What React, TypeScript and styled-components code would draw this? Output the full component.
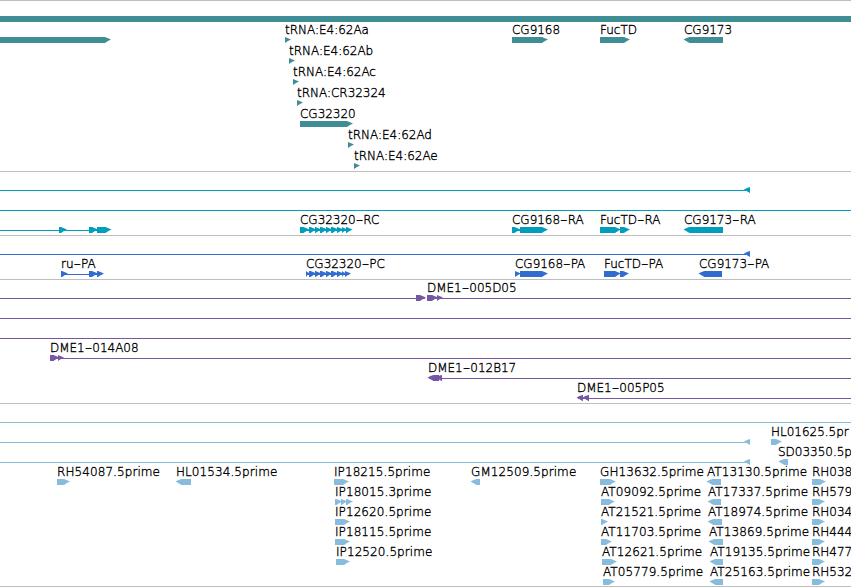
import { Fragment } from 'react';
import styled, { createGlobalStyle } from 'styled-components';

type Direction = 'right' | 'left' | 'none';

interface ExonType {
  start: number;
  end: number;
  dir: Direction;
}

interface FeatureType {
  label?: string;
  exons: ExonType[];
  intron?: [number, number];
}

interface TrackType {
  name: string;
  color: string;
  rowHeight: number;
  padding: string;
  rows: FeatureType[][];
}

const VIEW_WIDTH = 851;

function right(start: number, end: number): ExonType {
  return { start, end, dir: 'right' };
}

function left(start: number, end: number): ExonType {
  return { start, end, dir: 'left' };
}

function feature(label: string, ...exons: ExonType[]): FeatureType {
  return { label, exons };
}

// neighbouring exons, each tip running slightly into the next one
function chain(...points: number[]): ExonType[] {
  return points.slice(1).map((point, idx) => right(points[idx], idx < points.length - 2 ? point + 1.5 : point));
}

const fullLine: FeatureType = { exons: [], intron: [0, VIEW_WIDTH] };
const reverseLine: FeatureType = { exons: [left(744, 750)], intron: [0, 746] };

const tracks: TrackType[] = [
  {
    name: 'gene',
    color: '#408e95',
    rowHeight: 21,
    padding: '0 0 2px',
    rows: [
      [{ exons: [{ start: 0, end: VIEW_WIDTH, dir: 'none' }] }],
      [
        { exons: [right(0, 111)] },
        feature('tRNA:E4:62Aa', right(285, 291)),
        feature('CG9168', right(512, 548)),
        feature('FucTD', right(600, 630)),
        feature('CG9173', left(683.5, 723)),
      ],
      [feature('tRNA:E4:62Ab', right(289, 295))],
      [feature('tRNA:E4:62Ac', right(293, 299))],
      [feature('tRNA:CR32324', right(297, 303))],
      [feature('CG32320', right(300, 353))],
      [feature('tRNA:E4:62Ad', right(348, 354))],
      [feature('tRNA:E4:62Ae', right(354, 360))],
    ],
  },
  {
    name: 'mrna',
    color: '#009dbd',
    rowHeight: 20,
    padding: '1px 0 2px',
    rows: [
      [reverseLine],
      [fullLine],
      [
        { exons: [right(59, 67), right(89, 98), right(97, 111.5)], intron: [0, 97] },
        {
          ...feature('CG32320-RC', right(300, 309.5), ...chain(309, 315, 320, 326, 331, 337, 342, 346, 352.5)),
          intron: [300, 350],
        },
        { ...feature('CG9168-RA', right(512, 520.5), right(520, 548)), intron: [512, 546] },
        feature('FucTD-RA', right(600, 621), right(620, 630)),
        feature('CG9173-RA', left(683.5, 723)),
      ],
    ],
  },
  {
    name: 'cds',
    color: '#316dce',
    rowHeight: 20,
    padding: '1px 0 2px',
    rows: [
      [reverseLine],
      [
        { ...feature('ru-PA', right(61, 68), right(89, 98), right(97, 104)), intron: [61, 102] },
        { ...feature('CG32320-PC', ...chain(306, 309, 315, 320, 326, 331, 337, 342, 345, 351)), intron: [306, 349] },
        feature('CG9168-PA', right(515, 521), right(520, 548)),
        feature('FucTD-PA', right(604, 621), right(620, 629)),
        feature('CG9173-PA', left(698.5, 722)),
      ],
    ],
  },
  {
    name: 'bac',
    color: '#7458a5',
    rowHeight: 20,
    padding: '1px 0 2px',
    rows: [
      [
        { exons: [right(416, 426)], intron: [0, 425] },
        { ...feature('DME1-005D05', right(427, 438), right(437, 443)), intron: [427, VIEW_WIDTH] },
      ],
      [fullLine],
      [fullLine],
      [{ ...feature('DME1-014A08', right(50, 59.5), right(58, 64)), intron: [50, VIEW_WIDTH] }],
      [{ ...feature('DME1-012B17', left(427.5, 439), left(435.5, 442)), intron: [429, VIEW_WIDTH] }],
      [{ ...feature('DME1-005P05', left(576.5, 583), left(582.5, 589)), intron: [578, VIEW_WIDTH] }],
    ],
  },
  {
    name: 'est',
    color: '#88bcdc',
    rowHeight: 20,
    padding: '1px 0 1px',
    rows: [
      [fullLine],
      [reverseLine, feature('HL01625.5pr', right(771, 782))],
      [reverseLine, feature('SD03350.5p', left(778.4, 788))],
      [
        feature('RH54087.5prime', right(57, 70)),
        feature('HL01534.5prime', left(175.5, 191)),
        feature('IP18215.5prime', right(334, 349)),
        feature('GM12509.5prime', left(470.5, 480)),
        feature('GH13632.5prime', right(600, 616)),
        feature('AT13130.5prime', left(706.5, 721)),
        feature('RH038', right(812, 826)),
      ],
      [
        feature('IP18015.3prime', ...chain(335, 341, 346, 353)),
        feature('AT09092.5prime', right(601, 615)),
        feature('AT17337.5prime', left(707.5, 721)),
        feature('RH579', right(812, 825)),
      ],
      [
        feature('IP12620.5prime', right(335, 350)),
        feature('AT21521.5prime', right(601, 608)),
        feature('AT18974.5prime', left(707.5, 722)),
        feature('RH034', right(812, 825)),
      ],
      [
        feature('IP18115.5prime', right(335, 350)),
        feature('AT11703.5prime', right(601, 612)),
        feature('AT13869.5prime', left(708.5, 723)),
        feature('RH444', right(812, 825)),
      ],
      [
        feature('IP12520.5prime', right(336, 350)),
        feature('AT12621.5prime', right(602, 617)),
        feature('AT19135.5prime', left(709.5, 723)),
        feature('RH477', right(812, 825)),
      ],
      [
        feature('AT05779.5prime', right(603, 615)),
        feature('AT25163.5prime', left(709.5, 723)),
        feature('RH532', right(812, 825)),
      ],
    ],
  },
];

function getExonPoints({ start, end, dir }: ExonType) {
  const head = Math.min(6, end - start);

  if (dir === 'right') {
    const base = end - head;
    return `${start},0 ${base},0 ${end - 3},1.2 ${end},2.5 ${end - 3},4 ${base},6 ${start},6`;
  }
  if (dir === 'left') {
    const base = start + head;
    return `${end},0 ${base},0 ${start + 3},1 ${start},2.5 ${start + 3},4.2 ${base},6 ${end},6`;
  }
  return `${start},0 ${end},0 ${end},6 ${start},6`;
}

function FeatureLabel({ label, start }: { label: string; start: number }) {
  return (
    <Label $isLong={label.endsWith('prime')} style={{ left: Math.round(start) }}>
      {label.split('-').map((part, idx) => (
        <Fragment key={idx}>
          {idx > 0 && <Dash>-</Dash>}
          {part}
        </Fragment>
      ))}
    </Label>
  );
}

function FeatureRow({ features, height }: { features: FeatureType[]; height: number }) {
  return (
    <Row $height={height}>
      {features.map(({ label, exons }) => label && <FeatureLabel key={label} label={label} start={exons[0].start} />)}
      <Glyphs width={VIEW_WIDTH} height={6}>
        {features.map(({ exons, intron }, idx) => (
          <g key={idx}>
            {intron && <rect x={intron[0]} y={3} width={intron[1] - intron[0]} height={1} />}
            {exons.map((exon) => (
              <polygon key={exon.start} points={getExonPoints(exon)} />
            ))}
          </g>
        ))}
      </Glyphs>
    </Row>
  );
}

export default function App() {
  return (
    <>
      <GlobalStyle />
      <Browser>
        {tracks.map(({ name, color, rowHeight, padding, rows }) => (
          <Track key={name} $color={color} $padding={padding}>
            {rows.map((features, idx) => (
              <FeatureRow key={idx} features={features} height={rowHeight} />
            ))}
          </Track>
        ))}
      </Browser>
    </>
  );
}

const GlobalStyle = createGlobalStyle`
  body {
    margin: 0;
    background: #ffffff;
  }
`;

const Browser = styled.main`
  display: flex;
  flex-direction: column;

  width: 851px;
  height: 587px;

  border-top: 1px solid #bebebe;
  box-sizing: border-box;
  overflow: hidden;
`;

const Track = styled.section<{ $color: string; $padding: string }>`
  padding: ${({ $padding }) => $padding};

  border-bottom: 1px solid #bebebe;
  color: ${({ $color }) => $color};
`;

const Row = styled.div<{ $height: number }>`
  display: flex;
  align-items: flex-end;
  position: relative;

  height: ${({ $height }) => $height}px;
`;

/* labels sit at their feature's coordinate on the sequence axis */
const Label = styled.span<{ $isLong: boolean }>`
  position: absolute;
  bottom: 5px;

  color: #000000;
  font-family: 'DejaVu Sans', sans-serif;
  font-size: 12px;
  font-weight: 200;
  line-height: 16px;
  letter-spacing: ${({ $isLong }) => ($isLong ? 0.08 : -0.02)}px;
  white-space: nowrap;
  -webkit-text-stroke: 0.35px #000000;
`;

const Dash = styled.span`
  font-size: 21px;
  line-height: 0;
  vertical-align: -2px;
`;

const Glyphs = styled.svg`
  display: block;
  flex: none;

  fill: currentColor;
`;
